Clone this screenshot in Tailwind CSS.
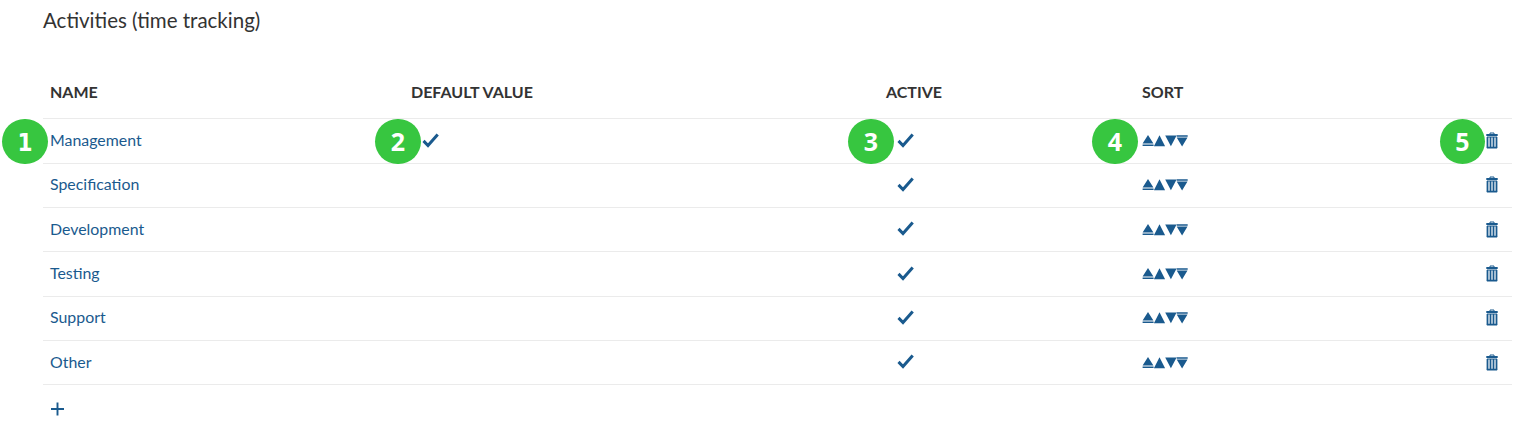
<!DOCTYPE html>
<html lang="en">
<head>
<meta charset="utf-8">
<title>Activities (time tracking)</title>
<script src="https://cdn.jsdelivr.net/npm/@tailwindcss/browser@4"></script>
</head>
<body class="bg-white font-['Lato',sans-serif] text-base text-[#333333]">
<svg class="hidden">
  <symbol id="check" viewBox="0 0 18 16"><path d="M1.5 7.9 6 12.6 15.7 1.5" fill="none" stroke="#1a5a8e" stroke-width="3"/></symbol>
  <symbol id="sort" viewBox="0 0 46 12"><path d="M6 0 11.4 8.6H.6zM0.6 9.5h11v1.6H.6zM17.5 .2 23.1 11.2H11.9zM23.2 .6h11.4L28.9 11.2zM34.7 .2h11v1.5h-11zM34.7 2.4h10.8L40.1 11.6z" fill="#1a5a8e"/></symbol>
  <symbol id="trash" viewBox="0 0 12 17"><path d="M4 2.2V1h4v1.2" fill="none" stroke="#1a5a8e" stroke-width="1"/><path d="M.3 3h11.4M.9 15.7h10.2" stroke="#1a5a8e" stroke-width="1.8"/><path d="M1.5 5v11M10.5 5v11M4.5 5v11M7.5 5v11" fill="none" stroke="#1a5a8e" stroke-width="1.8"/><path d="M1 5h10" stroke="#1a5a8e" stroke-width="1"/></symbol>
</svg>
<main class="relative h-[433px] w-[1528px] overflow-hidden pl-[43px] pr-4">
  <h1 class="h-[67px] pt-[6px] text-[20.5px] leading-7">Activities (time tracking)</h1>
  <div class="grid h-[51.4px] grid-cols-[361px_475px_256px_1fr] items-center pb-[1px] pl-[7px] font-bold">
    <div>NAME</div><div>DEFAULT VALUE</div><div>ACTIVE</div><div>SORT</div>
  </div>
  <div id="rows" class="border-b border-[#ebebeb]"></div>
  <a class="flex h-12 items-center pl-[7px]"><svg class="h-[14px] w-[14px]" viewBox="0 0 14 14"><path d="M7.5 .5v13M1 7h13" stroke="#1a5a8e" stroke-width="1.9"/></svg></a>
  <div class="absolute left-[2px] top-[119px] flex h-[45px] w-[46px] items-center justify-center rounded-full bg-[#37c640] pt-[2px] font-['DejaVu_Sans_Condensed','DejaVu_Sans',sans-serif] text-[24px] font-bold text-white">1</div>
  <div class="absolute left-[375px] top-[119px] flex h-[45px] w-[46px] items-center justify-center rounded-full bg-[#37c640] font-['Open_Sans',sans-serif] text-[25px] font-bold text-white">2</div>
  <div class="absolute left-[848px] top-[119px] flex h-[45px] w-[46px] items-center justify-center rounded-full bg-[#37c640] font-['Open_Sans',sans-serif] text-[25px] font-bold text-white">3</div>
  <div class="absolute left-[1092px] top-[119px] flex h-[45px] w-[46px] items-center justify-center rounded-full bg-[#37c640] font-['Open_Sans',sans-serif] text-[25px] font-bold text-white">4</div>
  <div class="absolute left-[1440px] top-[119px] flex h-[45px] w-[45px] items-center justify-center rounded-full bg-[#37c640] font-['Open_Sans',sans-serif] text-[25px] font-bold text-white">5</div>
</main>
<script>
document.getElementById('rows').innerHTML = ['Management','Specification','Development','Testing','Support','Other'].map((n, i) => `
<div class="grid h-[44.33px] grid-cols-[361px_475px_256px_1fr_20px] items-center border-t border-[#ebebeb] pl-[7px] text-[#1a5a8e]">
  <a class="pb-[2px] text-[15.9px]">${n}</a>
  <div class="pb-[1px] pl-[11px]">${i ? '' : '<svg class="h-4 w-[18px]"><use href="#check"/></svg>'}</div>
  <div class="pb-[1px] pl-[11px]"><svg class="h-4 w-[18px]"><use href="#check"/></svg></div>
  <div><svg class="h-3 w-[46px]"><use href="#sort"/></svg></div>
  <svg class="mb-[1px] ml-[-6px] h-[17px] w-3"><use href="#trash"/></svg>
</div>`).join('');
</script>
</body>
</html>
